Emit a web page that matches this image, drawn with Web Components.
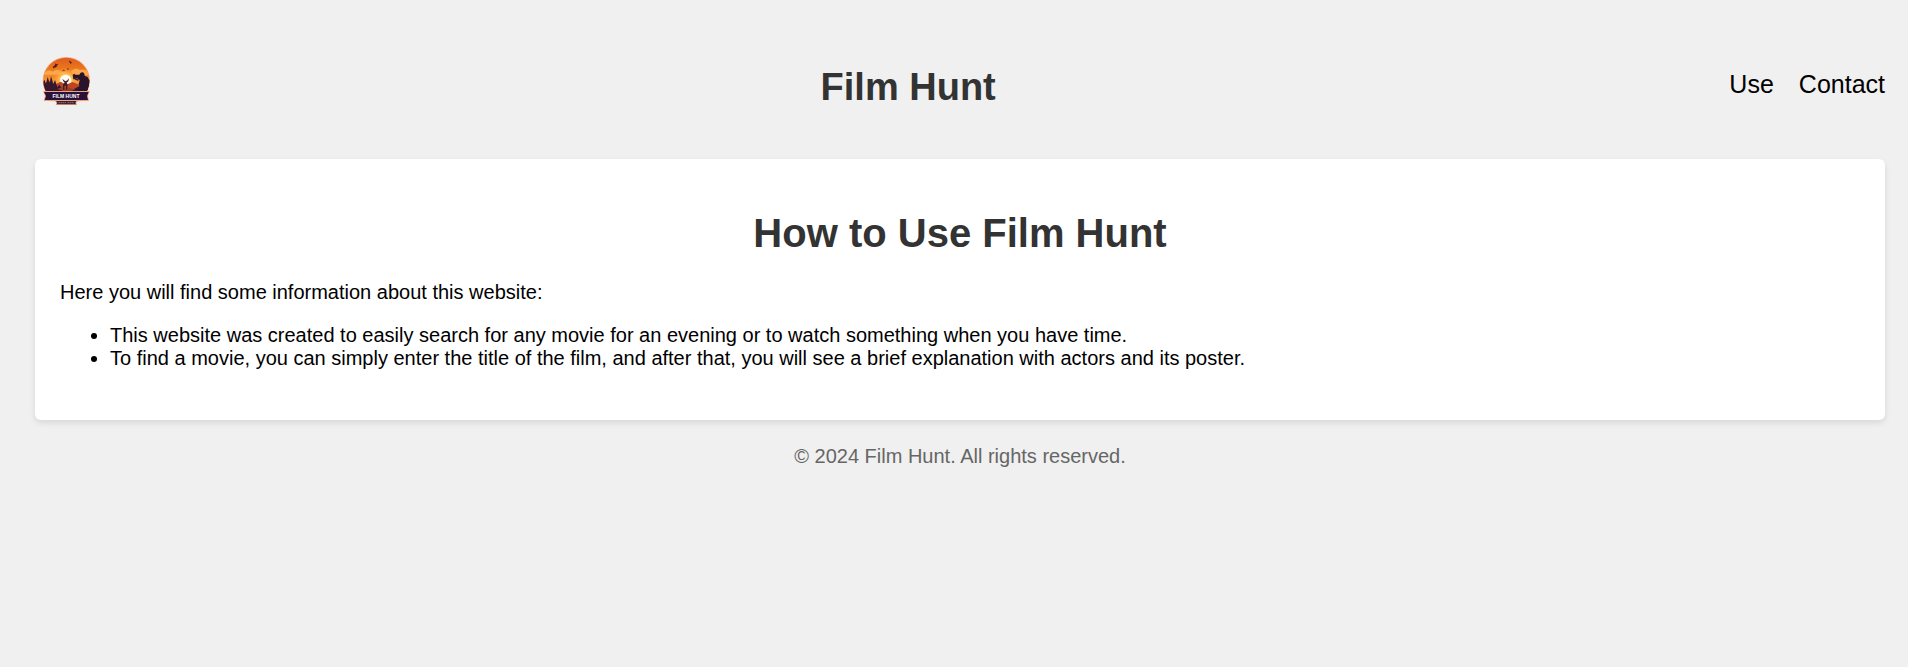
<!DOCTYPE html>
<html lang="en">
<head>
<meta charset="utf-8">
<meta name="viewport" content="width=device-width, initial-scale=1">
<title>Film Hunt</title>
<style>
  body { margin: 0; background: #f0f0f0; color: #000; font: 20px/23px "Liberation Sans", Arial, sans-serif; }
  info-card p { margin: 0 0 20px; }
  info-card ul { margin: 0; padding-left: 50px; }
</style>
</head>
<body>
<film-page>
  <film-header slot="header" heading="Film Hunt">
    <nav-link href="#use">Use</nav-link>
    <nav-link href="#contact">Contact</nav-link>
  </film-header>
  <info-card heading="How to Use Film Hunt">
    <p>Here you will find some information about this website:</p>
    <ul>
      <li>This website was created to easily search for any movie for an evening or to watch something when you have time.</li>
      <li>To find a movie, you can simply enter the title of the film, and after that, you will see a brief explanation with actors and its poster.</li>
    </ul>
  </info-card>
  <film-footer slot="footer">© 2024 Film Hunt. All rights reserved.</film-footer>
</film-page>

<script>
const define = (name, html, setup) => {
  const template = document.createElement('template');
  template.innerHTML = html;
  customElements.define(name, class extends HTMLElement {
    constructor() {
      super();
      this.attachShadow({ mode: 'open' }).append(template.content.cloneNode(true));
    }
    connectedCallback() { if (setup) setup(this, this.shadowRoot); }
  });
};

define('film-page', `
<style>
  :host { display: block; padding: 54px 23px 25px 35px; }
  main { margin-top: 52px; }
</style>
<slot name="header"></slot>
<main><slot></slot></main>
<slot name="footer"></slot>`);

define('film-logo', `
<style>
  :host { display: block; }
  svg { display: block; width: 52px; height: 52px; overflow: visible; }
  text { font-family: "Liberation Sans", Arial, sans-serif; font-weight: bold; }
</style>
<svg viewBox="17 27 156 156" role="img" aria-label="Film Hunt logo">
  <defs>
    <linearGradient id="sky" x1="0" y1="0" x2="0" y2="1">
      <stop offset="0" stop-color="#de5a1e"/><stop offset=".3" stop-color="#ee7c1e"/>
      <stop offset=".55" stop-color="#f89c38"/><stop offset=".8" stop-color="#df6526"/>
    </linearGradient>
    <radialGradient id="glow"><stop offset="0" stop-color="#fff3cf"/><stop offset=".45" stop-color="#ffc15a"/><stop offset="1" stop-color="#f9962c" stop-opacity="0"/></radialGradient>
    <clipPath id="disc"><circle cx="111" cy="107" r="69"/></clipPath>
  </defs>
  <circle cx="111" cy="107" r="71" fill="#f4ae82"/>
  <g clip-path="url(#disc)">
    <rect x="40" y="35" width="145" height="145" fill="url(#sky)"/>
    <path d="M45 84q12-12 25-4q13-12 27 0l18 4-18 5H45zM125 79q14-15 26-4q15-6 29 8v8h-50z" fill="#ffb65b" opacity=".75"/>
    <circle cx="109" cy="105" r="38" fill="url(#glow)"/>
    <circle cx="109" cy="106" r="17" fill="#fffdf2"/>
    <path d="M40 121l18-14 18 12 18-9 16 9 20-8 20 8 32-9v40H40z" fill="#bd4525"/>
    <path d="M40 145V113l5-9 5 12 5-20 6 19 4-22 7 24 5-12 7 22 6-8 9 13 14-1 20 2 17-10 10-15 22-3v40z" fill="#351730"/>
    <path d="M83 132q24-12 55 2l-25 8z" fill="#92402c"/>
    <path d="M101 134v-16l5-5-4-4-3-8 5 5 5 3 5-3 5-6-2 9-5 4 3 6-2 15h-3v-12l-5 1v11z" fill="#421b2b"/>
    <path d="M130 89l5-3 3 3h12l3-5q7-5 12 2l1 7 8 2 8 14v37h-30l-9-9 9-12-4-8 3-12-8-5-11 3z" fill="#29142e"/>
    <path d="M137 99l13 5-5 3-10-4z" fill="#42182d"/>
  </g>
  <path d="M70 66l6-5 3-6 3 3 5-2-4 6-2 5-6 1-3 2zM118 49l4-2 3 4 4 1-3 2-3 3-2-5zM98 76l5-2 5 2-5 1zM112 72l4-2 3 2-3 2z" fill="#54201f"/>
  <path d="M41 138H181l-5 15 3 15-38 1H80l-37-1 4-15z" fill="#f3a477"/>
  <path d="M44 141H178l-5 12 3 12H46l4-12z" fill="#291139"/>
  <path d="M77 166H144l-3 7 2 7H79l2-7z" fill="#eaa27d"/>
  <path d="M80 168H141l-3 5 2 5H82l2-5z" fill="#35203b"/>
  <text x="110" y="159" text-anchor="middle" font-size="15" fill="#fff">FILM HUNT</text>
  <path d="M88 173h22M115 173h19" stroke="#c77c65" stroke-width="4" stroke-dasharray="3 3"/>
</svg>`);

define('film-header', `
<style>
  :host { display: block; }
  header { display: flex; align-items: flex-start; justify-content: space-between; }
  h1 { margin: 13px 0 0; font-size: 38px; line-height: 40px; color: #333; }
  nav { display: flex; gap: 25px; margin-top: 16px; }
</style>
<header><film-logo></film-logo><h1></h1><nav><slot></slot></nav></header>`,
(el, root) => { root.querySelector('h1').textContent = el.getAttribute('heading'); });

define('nav-link', `
<style>
  :host { display: block; font-size: 25px; line-height: 29px; }
  a { color: inherit; text-decoration: none; }
</style>
<a><slot></slot></a>`,
(el, root) => { root.querySelector('a').href = el.getAttribute('href'); });

define('info-card', `
<style>
  :host { display: block; padding: 51px 25px 50px; background: #fff; border-radius: 6px; box-shadow: 0 3px 6px rgba(0, 0, 0, .1); }
  h2 { margin: 0 0 25px; font-size: 40px; line-height: 46px; text-align: center; color: #333; }
</style>
<h2></h2><slot></slot>`,
(el, root) => { root.querySelector('h2').textContent = el.getAttribute('heading'); });

define('film-footer', `
<style>
  :host { display: block; margin-top: 25px; text-align: center; color: #666; }
</style>
<footer><slot></slot></footer>`);
</script>
</body>
</html>
